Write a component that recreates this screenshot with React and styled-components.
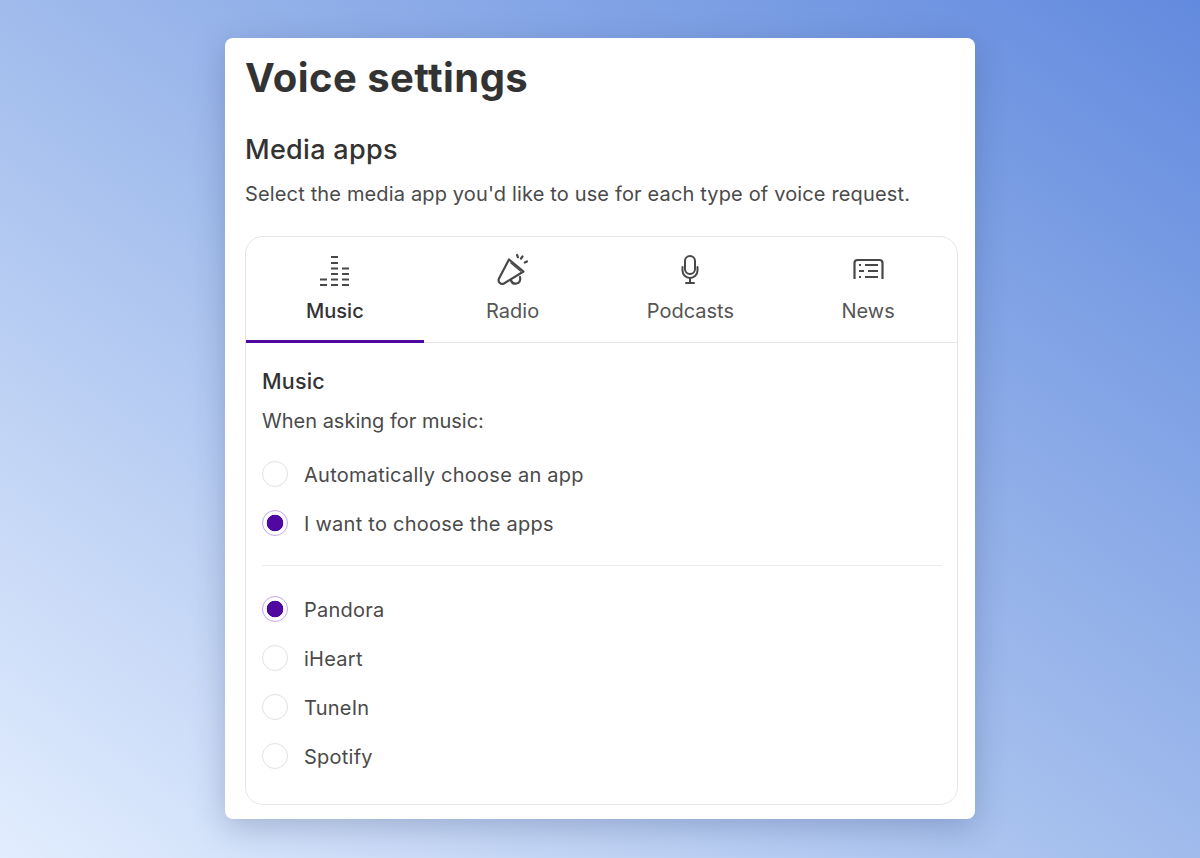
import React, { useState } from 'react';
import styled, { createGlobalStyle } from 'styled-components';

const GlobalStyle = createGlobalStyle`
  html, body {
    margin: 0;
    padding: 0;
  }
  * {
    box-sizing: border-box;
  }
`;

const Page = styled.div`
  height: 858px;
  overflow: hidden;
  display: flex;
  justify-content: center;
  align-items: flex-start;
  padding-top: 38px;
  background: linear-gradient(to top right, #e2edfe 0%, #a0bbec 50%, #628ade 100%);
  font-family: Inter, "Liberation Sans", sans-serif;
  color: #333;
`;

const Card = styled.div`
  width: 750px;
  height: 781px;
  padding: 0 17px 14px 20px;
  background: #fff;
  border-radius: 8px;
  box-shadow: 0 8px 32px rgba(40, 60, 110, 0.28);
  display: flex;
  flex-direction: column;
`;

const Title = styled.h1`
  margin: 14px 0 0;
  font-size: 40px;
  line-height: 52px;
  font-weight: 700;
  letter-spacing: 0.43px;
  color: #333;
`;

const Subtitle = styled.h2`
  margin: 28px 0 0;
  font-size: 27px;
  line-height: 36px;
  font-weight: 500;
  letter-spacing: 0.3px;
  color: #333;
`;

const Intro = styled.p`
  margin: 10px 0 0;
  font-size: 20px;
  line-height: 32px;
  letter-spacing: 0.15px;
  color: #4a4a4a;
`;

const Panel = styled.div`
  margin-top: 26px;
  flex: 1;
  border: 1px solid #e6e6e6;
  border-radius: 18px;
  display: flex;
  flex-direction: column;
`;

const Tabs = styled.div`
  display: grid;
  grid-template-columns: repeat(4, 1fr);
  height: 106px;
  border-bottom: 1px solid #e6e6e6;
`;

const Tab = styled.button`
  border: 0;
  background: none;
  padding: 16px 0 0;
  margin-bottom: -1px;
  display: flex;
  flex-direction: column;
  align-items: center;
  font-family: inherit;
  font-size: 20px;
  line-height: 26px;
  font-weight: ${(p) => (p.$active ? 500 : 400)};
  color: ${(p) => (p.$active ? '#333' : '#555')};
  border-bottom: 3px solid ${(p) => (p.$active ? '#5009a0' : 'transparent')};
  cursor: pointer;

  svg {
    width: 36px;
    height: 36px;
    margin-bottom: 9px;
    color: #484848;
  }
`;

const Body = styled.div`
  padding: 24px 15px 0 16px;
`;

const SectionTitle = styled.h3`
  margin: 0;
  font-size: 21.5px;
  line-height: 28px;
  font-weight: 500;
  letter-spacing: 0.2px;
  color: #333;
`;

const Question = styled.p`
  margin: 12px 0 15px;
  font-size: 20px;
  line-height: 28px;
  color: #4a4a4a;
`;

const Option = styled.label`
  display: flex;
  align-items: center;
  gap: 16px;
  height: 49px;
  font-size: 20px;
  letter-spacing: 0.25px;
  color: #4a4a4a;
  cursor: pointer;
`;

const RadioInput = styled.input`
  appearance: none;
  margin: -2px 0 0;
  width: 26px;
  height: 26px;
  border-radius: 50%;
  border: 1.5px solid ${(p) => (p.checked ? '#c4a6e6' : '#e2e2e2')};
  background: ${(p) =>
    p.checked ? 'radial-gradient(circle, #5009a0 0 8px, #fff 8.6px)' : '#fff'};
  cursor: pointer;
`;

const Divider = styled.hr`
  margin: 17px 0 19px;
  border: 0;
  border-top: 1px solid #ededed;
`;

const MusicIcon = () => (
  <svg viewBox="0 0 36 36" fill="none" stroke="currentColor" strokeWidth="2.2">
    <path d="M3 26.500h7M3 32h7" />
    <path d="M14 4h7M14 10h7M14 15.500h7M14 21h7M14 26.500h7M14 32h7" />
    <path d="M25 15.500h7M25 21h7M25 26.500h7M25 32h7" />
  </svg>
);

const RadioIcon = () => (
  <svg viewBox="0 0 36 36" fill="none" stroke="currentColor" strokeWidth="2.2" strokeLinecap="round" strokeLinejoin="round">
    <path d="M14 6.500 28.500 18.500 9 30.500C5.500 32 2.500 28.500 4 25.500z" />
    <path d="M16 10 25.500 18" strokeWidth="1.500" />
    <path d="M16 27.500c1 2.500 3.500 3.500 5.500 3 3-.6 4.500-3.500 3.500-6.500" />
    <path d="M22 2l1 2.200M27.500 3.500 26 5.500M32 8.500l-2.200 1" />
  </svg>
);

const MicIcon = () => (
  <svg viewBox="0 0 36 36" fill="none" stroke="currentColor" strokeWidth="2" strokeLinecap="round" strokeLinejoin="round">
    <rect x="13" y="3" width="10" height="18" rx="5" />
    <path d="M10.500 14v3.500a7.500 7.500 0 0 0 15 0V14" />
    <path d="M18 25v5M14 30h8" />
  </svg>
);

const NewsIcon = () => (
  <svg viewBox="0 0 36 36" fill="none" stroke="currentColor" strokeWidth="2">
    <path d="M4.500 26V10c0-2 1-3 3-3h22c2 0 3 1 3 3v16" strokeWidth="2.200" />
    <path d="M9 12h2M15 12h13M9 18h5M18 18h10M9 24h2M15 24h13" />
  </svg>
);

const tabs = [
  { label: 'Music', icon: <MusicIcon /> },
  { label: 'Radio', icon: <RadioIcon /> },
  { label: 'Podcasts', icon: <MicIcon /> },
  { label: 'News', icon: <NewsIcon /> },
];

const apps = ['Pandora', 'iHeart', 'TuneIn', 'Spotify'];

const App = () => {
  const [tab, setTab] = useState('Music');
  const [mode, setMode] = useState('manual');
  const [app, setApp] = useState('Pandora');

  return (
    <>
      <GlobalStyle />
      <Page>
        <Card>
          <Title>Voice settings</Title>
          <Subtitle>Media apps</Subtitle>
          <Intro>Select the media app you'd like to use for each type of voice request.</Intro>
          <Panel>
            <Tabs>
              {tabs.map((t) => (
                <Tab key={t.label} $active={tab === t.label} onClick={() => setTab(t.label)}>
                  {t.icon}
                  {t.label}
                </Tab>
              ))}
            </Tabs>
            <Body>
              <SectionTitle>Music</SectionTitle>
              <Question>When asking for music:</Question>
              <Option>
                <RadioInput type="radio" checked={mode === 'auto'} onChange={() => setMode('auto')} />
                Automatically choose an app
              </Option>
              <Option>
                <RadioInput type="radio" checked={mode === 'manual'} onChange={() => setMode('manual')} />
                I want to choose the apps
              </Option>
              <Divider />
              {apps.map((a) => (
                <Option key={a}>
                  <RadioInput type="radio" checked={app === a} onChange={() => setApp(a)} />
                  {a}
                </Option>
              ))}
            </Body>
          </Panel>
        </Card>
      </Page>
    </>
  );
};

export default App;
